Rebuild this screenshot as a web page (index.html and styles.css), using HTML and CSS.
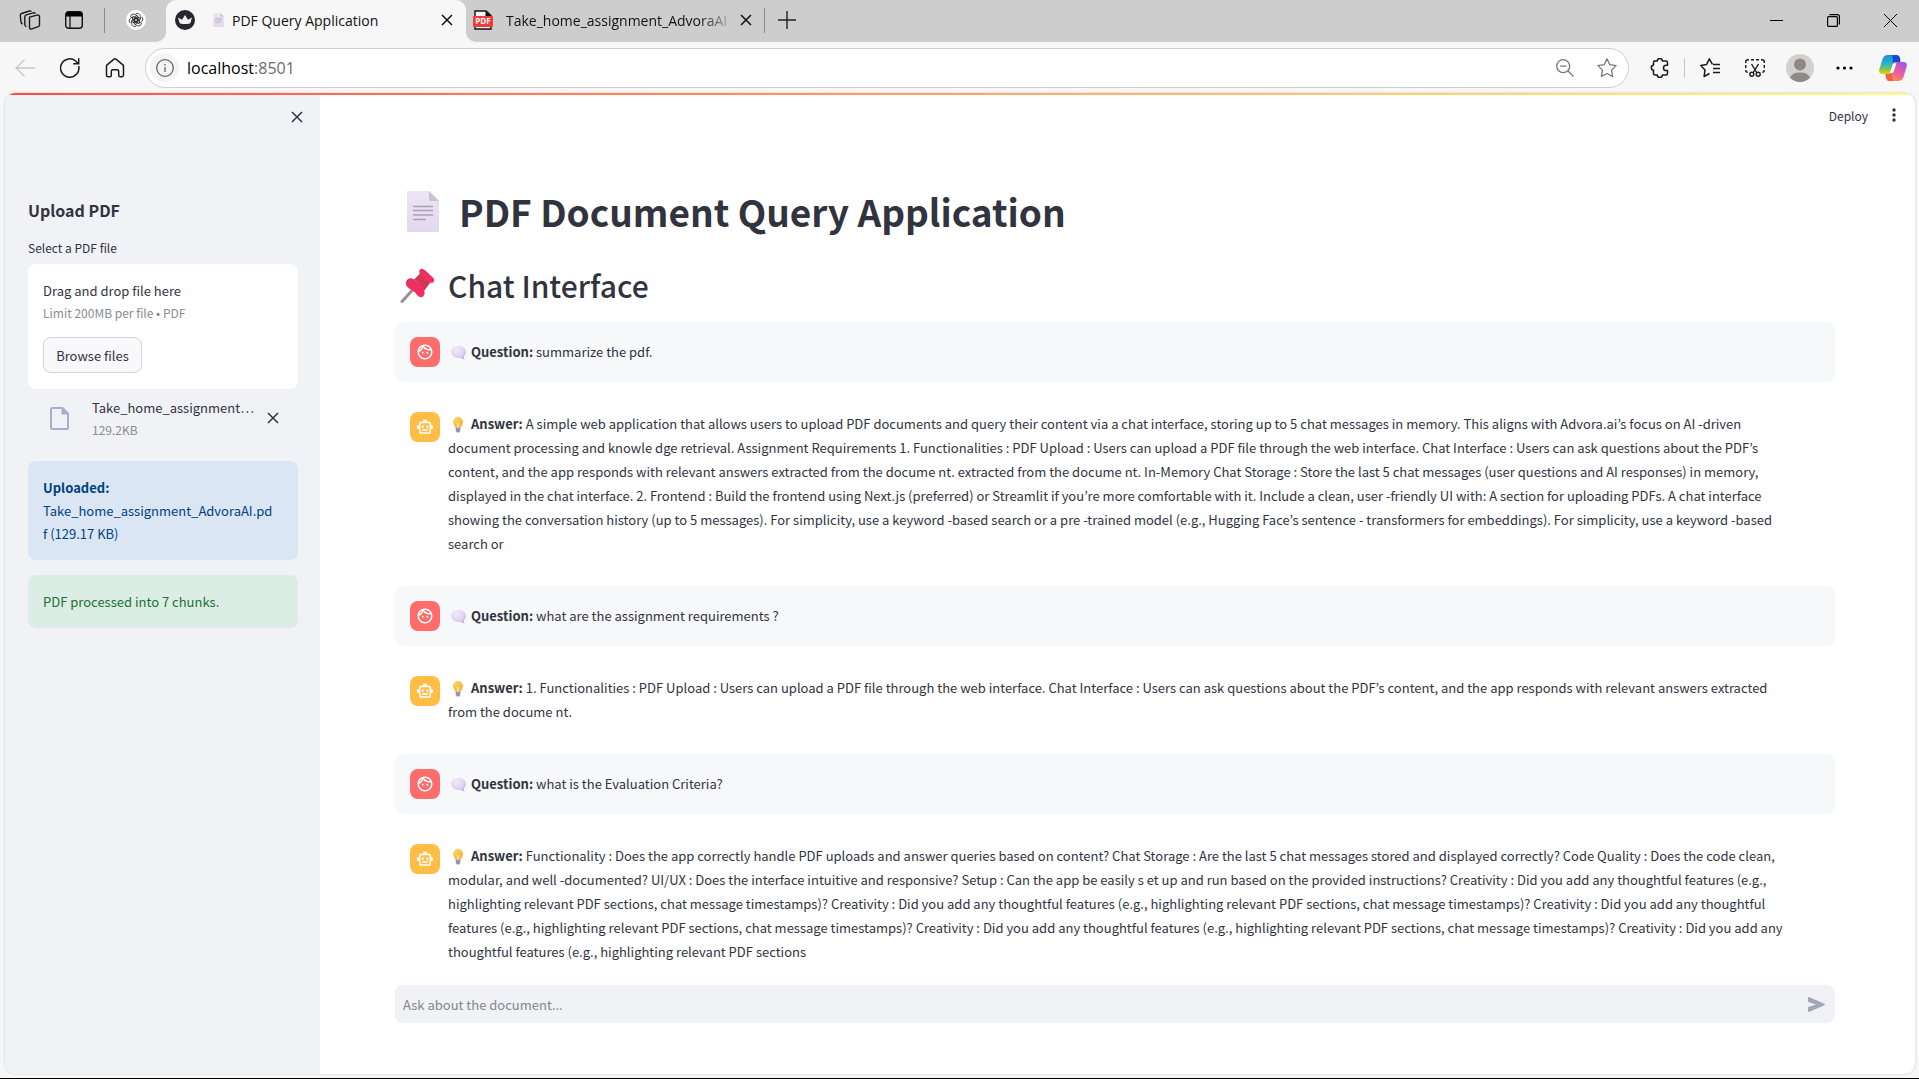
FILE: index.html
```html
<!DOCTYPE html>
<html lang="en">
<head>
<meta charset="utf-8">
<title>PDF Query Application</title>
<link rel="stylesheet" href="styles.css">
</head>
<body>
<svg class="defs" aria-hidden="true">
  <defs>
    <linearGradient id="paper" x1="0" y1="0" x2="0" y2="1"><stop offset="0" stop-color="#ece5f4"/><stop offset="1" stop-color="#e2d9ee"/></linearGradient>
    <linearGradient id="bulbFill" x1="0" y1="0" x2="1" y2="1"><stop offset="0" stop-color="#ffd95c"/><stop offset="1" stop-color="#f5a93a"/></linearGradient>
    <radialGradient id="bubbleFill" cx=".35" cy=".3" r=".8"><stop offset="0" stop-color="#f1eafa"/><stop offset=".7" stop-color="#dcd0ee"/><stop offset="1" stop-color="#c0abdc"/></radialGradient>
    <linearGradient id="pinFill" x1="0" y1="0" x2="1" y2="1"><stop offset="0" stop-color="#e0335e"/><stop offset="1" stop-color="#fb2b63"/></linearGradient>
    <linearGradient id="copA" x1="0" y1="0" x2="0" y2="1"><stop offset="0" stop-color="#1a8be8"/><stop offset=".45" stop-color="#29b5c9"/><stop offset=".75" stop-color="#7cc653"/><stop offset="1" stop-color="#ffc800"/></linearGradient>
    <linearGradient id="copB" x1=".8" y1="0" x2=".2" y2="1"><stop offset="0" stop-color="#a256e8"/><stop offset=".5" stop-color="#ec5c9c"/><stop offset="1" stop-color="#ff9a3d"/></linearGradient>
    <symbol id="x" viewBox="0 0 12 12"><path d="M1 1l10 10M11 1L1 11" fill="none" stroke="currentColor" stroke-width="1.5"/></symbol>
    <symbol id="doc" viewBox="0 0 32 41"><path d="M1 0h21l10 10v29.500a1.500 1.500 0 0 1-1.500 1.500h-29A1.500 1.500 0 0 1 0 39.500V1a1 1 0 0 1 1-1z" fill="url(#paper)"/><path d="M22 0l10 10H23.500a1.500 1.500 0 0 1-1.500-1.500z" fill="#c9c1d4"/><path d="M6 15.500h20M6 19.500h20M6 24h20M6 28.500h13" stroke="#aaa0b2" stroke-width="1.500"/></symbol>
    <symbol id="bubble" viewBox="0 0 16 14"><path d="M7.500 0C11.700 0 15 2.500 15 5.800c0 2-.9 3.500-2.300 4.600.1 1.200.5 2 1 2.800-1.700 0-3-.6-4-1.500-.7.2-1.400.2-2.200.2C3.300 11.900 0 9.200 0 5.900S3.300 0 7.500 0z" fill="url(#bubbleFill)"/></symbol>
    <symbol id="bulb" viewBox="0 0 12 16"><path d="M6 0a5 5 0 0 1 5 5c0 2.200-1.400 3.300-2 5.200-.1.500-.4.800-.9.800H3.900c-.5 0-.8-.3-.9-.8C2.400 8.300 1 7.200 1 5a5 5 0 0 1 5-5z" fill="url(#bulbFill)"/><path d="M4.500 6l1 1.500v3M7.500 6l-1 1.500v3" fill="none" stroke="#fff3b0" stroke-width=".8"/><path d="M3.700 11h4.600v2.500L7.300 15.500H4.700L3.700 13.500z" fill="#9d8fbb"/></symbol>
    <symbol id="face" viewBox="0 0 24 24"><path fill="currentColor" d="M10.250 13c0 .690-.560 1.250-1.250 1.250S7.750 13.690 7.750 13s.560-1.250 1.250-1.250 1.250.560 1.250 1.250zM15 11.750c-.690 0-1.250.560-1.250 1.250s.560 1.250 1.250 1.250 1.250-.560 1.250-1.250-.560-1.250-1.250-1.250zM22 12c0 5.520-4.480 10-10 10S2 17.520 2 12 6.480 2 12 2s10 4.480 10 10zM10.660 4.120C12.060 6.440 14.600 8 17.500 8c.460 0 .910-.050 1.340-.120C17.440 5.560 14.900 4 12 4c-.460 0-.910.050-1.340.120zM4.420 9.470c1.710-.970 3.030-2.550 3.660-4.440C6.370 6 5.050 7.580 4.420 9.470zM20 12c0-.780-.120-1.530-.330-2.240-.700.150-1.420.240-2.170.240-3.130 0-5.920-1.440-7.760-3.690C8.690 8.870 6.600 10.880 4 11.860c.010.040 0 .090 0 .140 0 4.410 3.590 8 8 8s8-3.590 8-8z"/></symbol>
    <symbol id="robot" viewBox="0 0 24 24"><path fill="currentColor" d="M20 9V7c0-1.100-.900-2-2-2h-3c0-1.660-1.340-3-3-3S9 3.340 9 5H6c-1.100 0-2 .900-2 2v2c-1.660 0-3 1.340-3 3s1.340 3 3 3v4c0 1.100.900 2 2 2h12c1.100 0 2-.900 2-2v-4c1.660 0 3-1.340 3-3s-1.340-3-3-3zm-2 10H6V7h12v12zm-9-6c-.830 0-1.500-.670-1.500-1.500S8.170 10 9 10s1.500.670 1.500 1.500S9.830 13 9 13zm7.500-1.500c0 .830-.670 1.500-1.500 1.500s-1.500-.670-1.500-1.500.670-1.500 1.500-1.500 1.500.670 1.500 1.500zM8 15h8v2H8v-2z"/></symbol>
  </defs>
</svg>

<div class="browser">
  <header class="tab-strip">
    <div class="strip-start">
      <button class="strip-btn" aria-label="Workspaces"><svg width="22" height="22" viewBox="0 0 22 22" fill="none" stroke="#1b1b1b" stroke-width="1.400" stroke-linejoin="round"><path d="M10.500 8.200l7.500-2.100q2.500-.5 2.500 1.800v8q0 1.400-1.300 1.800l-6.300 2.200q-2.400.7-2.400-1.600z"/><path d="M7.500 17.500q-1.700-.3-1.700-2V7.700q0-1.500 1.400-1.900l7-2q1.500-.4 2.200.7"/><path d="M3.600 15q-1.300-.4-1.500-1.500L1.300 6.600Q1.100 5 2.600 4.500l7.800-2.500q1.400-.4 2 .5"/></svg></button>
      <button class="strip-btn" aria-label="Tab actions"><svg width="18" height="18" viewBox="0 0 18 18"><rect x=".7" y=".7" width="16.600" height="16.600" rx="3" fill="none" stroke="#111" stroke-width="1.400"/><path d="M1 5.500V3.500A2.500 2.500 0 0 1 3.500 1h11A2.500 2.500 0 0 1 17 3.500v2z" fill="#000"/><path d="M5 5v12" stroke="#111" stroke-width="1.300"/></svg></button>
      <span class="divider"></span>
      <button class="pinned-tab" aria-label="Pinned tab"><svg width="20" height="20" viewBox="0 0 20 20"><circle cx="10" cy="10" r="10" fill="#fff"/><g fill="none" stroke="#222" stroke-width=".8"><path id="petal" d="M10 3.700c2-1 4.300.4 4.300 2.600v3.200L10.500 11.800 8 10.300V7.200L11.200 5.400"/><use href="#petal" transform="rotate(60 10 10)"/><use href="#petal" transform="rotate(120 10 10)"/><use href="#petal" transform="rotate(180 10 10)"/><use href="#petal" transform="rotate(240 10 10)"/><use href="#petal" transform="rotate(300 10 10)"/></g></svg></button>
    </div>
    <div class="tab-slot">
      <div class="tab tab-active">
        <svg width="20" height="20" viewBox="0 0 20 20"><circle cx="10" cy="10" r="10" fill="#262730"/><path d="M3 7.500l4 2.300L10 5l3 4.800 4-2.300-1.700 5.700q-5.300 1.800-10.600 0z" fill="#f3f1ee"/></svg>
        <svg class="tab-doc" width="11" height="14" viewBox="0 0 32 41"><use href="#doc"/></svg>
        <span class="tab-title">PDF Query Application</span>
        <button class="tab-close" aria-label="Close tab"><svg width="12" height="12"><use href="#x"/></svg></button>
      </div>
    </div>
    <div class="strip-end">
      <div class="tab tab-idle">
        <svg width="20" height="20" viewBox="0 0 20 20"><path d="M2 1h11l5 4.500V19H2z" fill="#f5f5f5" stroke="#111" stroke-width="1.400"/><path d="M12.500 1v5H18z" fill="#111"/><rect y="6" width="20" height="11" rx="1" fill="#f5383b"/><text class="pdf-mark" x="10" y="14" text-anchor="middle">PDF</text></svg>
        <span class="tab-title tab-fade">Take_home_assignment_AdvoraAI</span>
        <button class="tab-close" aria-label="Close tab"><svg width="12" height="12"><use href="#x"/></svg></button>
      </div>
      <span class="divider"></span>
      <button class="new-tab" aria-label="New tab"><svg width="18" height="18" viewBox="0 0 18 18"><path d="M9 0v18M0 9h18" stroke="#222" stroke-width="1.400"/></svg></button>
      <div class="window-controls">
        <button class="win-btn" aria-label="Minimize"><svg width="13" height="13" viewBox="0 0 13 13"><path d="M0 6.500h13" stroke="#000"/></svg></button>
        <button class="win-btn" aria-label="Restore"><svg width="13" height="13" viewBox="0 0 13 13" fill="none" stroke="#000" stroke-width="1.200"><rect x=".6" y="2.600" width="9.800" height="9.800" rx="1"/><path d="M2.500 .6h8q1.900 0 1.900 1.900v8"/></svg></button>
        <button class="win-btn" aria-label="Close"><svg width="13" height="13" viewBox="0 0 13 13"><path d="M0 0l13 13M13 0L0 13" stroke="#000"/></svg></button>
      </div>
    </div>
  </header>

  <nav class="toolbar" aria-label="Browser toolbar">
    <button class="tool" aria-label="Back" disabled><svg width="20" height="18" viewBox="0 0 20 18" fill="none" stroke="#c9c9c9" stroke-width="1.300"><path d="M20 9H1M9.500 .7L1 9l8.500 8.300"/></svg></button>
    <button class="tool" aria-label="Refresh"><svg width="20" height="20" viewBox="0 0 20 20" fill="none" stroke="#1b1b1b" stroke-width="1.500"><path d="M18.700 8a9.200 9.200 0 1 1-3.100-5l2.600 2.500M18.700 .3v5.400h-5.500"/></svg></button>
    <button class="tool" aria-label="Home"><svg width="20" height="20" viewBox="0 0 20 20" fill="none" stroke="#1b1b1b" stroke-width="1.500" stroke-linejoin="round"><path d="M1.500 8.200q0-.8.600-1.300L9 1.200q1-.8 2 0l6.900 5.700q.6.500.6 1.300V17q0 1.700-1.700 1.700h-1.600q-1.500 0-1.500-1.500v-4q0-1.500-1.500-1.500H7.800q-1.500 0-1.500 1.500v4q0 1.500-1.500 1.500H3.200Q1.500 18.700 1.500 17z"/></svg></button>
    <div class="address">
      <button class="site-info" aria-label="Site information"><svg width="18" height="18" viewBox="0 0 18 18"><circle cx="9" cy="9" r="8.300" fill="none" stroke="#666" stroke-width="1.300"/><path d="M9 8v5M9 5v1.500" stroke="#666" stroke-width="1.300"/></svg></button>
      <a class="url" href="#">localhost<span class="port">:8501</span></a>
      <button class="tool" aria-label="Zoom out"><svg width="18" height="18" viewBox="0 0 18 18" fill="none" stroke="#777" stroke-width="1.300"><circle cx="7.200" cy="7.200" r="6.500"/><path d="M12 12l5.500 5.500M4.200 7.200h6"/></svg></button>
      <button class="tool star" aria-label="Add to favorites"><svg width="20" height="20" viewBox="0 0 20 20" fill="none" stroke="#777" stroke-width="1.300" stroke-linejoin="round"><path d="M10 .9l2.800 5.800 6.300.9-4.600 4.500 1.100 6.400L10 15.500l-5.600 3 1.100-6.400L.9 7.600l6.300-.9z"/></svg></button>
    </div>
    <button class="tool" aria-label="Extensions"><svg width="20" height="20" viewBox="0 0 20 20" fill="none" stroke="#1b1b1b" stroke-width="1.500" stroke-linejoin="round"><path d="M4 3h3.300a2.500 2.500 0 0 1 5 0H16q1.500 0 1.500 1.500v2.700h-1.300a2.700 2.700 0 0 0 0 5.400h1.300v2.900q0 1.500-1.500 1.500h-3.700a2.500 2.500 0 0 1-5 0H5q-1.500 0-1.500-1.500v-3.200a2.700 2.700 0 0 1 0-5.300V4.500Q3.500 3 5 3z"/></svg></button>
    <span class="tool-divider"></span>
    <button class="tool" aria-label="Favorites"><svg width="20" height="20" viewBox="0 0 20 20" fill="none" stroke="#1b1b1b" stroke-width="1.500" stroke-linejoin="round"><path d="M12.500 6.300L9.300 .9 6.500 6.600l-5.800.9 4.300 4.400-.9 6.600 5.400-3M13 6.500h7M13 10.500h7M13 14.500h7"/></svg></button>
    <button class="tool" aria-label="Screenshot"><svg width="20" height="18" viewBox="0 0 20 18" fill="none" stroke="#1b1b1b" stroke-width="1.400"><path d="M.7 4V3Q.7 .7 3 .7h1M6 .7h3M11 .7h3M16 .7h1q2.300 0 2.300 2.300v1M.7 6v3M19.300 6v3M.7 11q0 2.300 2 2.300M19.300 11q0 2.300-2 2.300M6.500 5l5.500 9M13.500 5L8 14"/><circle cx="6.800" cy="15.200" r="2"/><circle cx="13.200" cy="15.200" r="2"/></svg></button>
    <button class="tool" aria-label="Profile"><svg width="28" height="28" viewBox="0 0 28 28"><circle cx="14" cy="14" r="14" fill="#d3d0ce"/><circle cx="14" cy="10.500" r="6" fill="#8d8986"/><path d="M4 23.800q2-5.300 10-5.300t10 5.300A14 14 0 0 1 4 23.800z" fill="#8d8986"/></svg></button>
    <button class="tool" aria-label="Settings and more"><svg width="17" height="4" viewBox="0 0 17 4"><circle cx="2" cy="2" r="1.600"/><circle cx="8.500" cy="2" r="1.600"/><circle cx="15" cy="2" r="1.600"/></svg></button>
    <button class="tool copilot" aria-label="Copilot"><svg width="28" height="26" viewBox="0 0 28 26"><path d="M9 0h8.500q2.500 0 3.300 2.500L21.500 5H17q-2 0-2.600 2l-3 10q-.6 2-2.600 2H3.500Q-.5 19 .3 14.500L3.500 4Q5 0 9 0z" fill="url(#copA)"/><path d="M13.500 0h4q2.500 0 3.300 2.500L21.500 7H17q-2 0-3 2z" fill="#1b49c9"/><path d="M19 26h-8.500Q8 26 7.200 23.500L6.500 19h3.300q2 0 2.600-2l3-8q.6-2 2.600-2h6.500q4 0 3.200 4.500L24.500 22q-1.500 4-5.500 4z" fill="url(#copB)"/><path d="M14 26h-3.500Q8 26 7.200 23.500L6.500 19h3.300q2 0 2.700-2z" fill="#f2623a"/><path d="M14.500 8.500h3l-3.500 9.500h-3z" fill="#fff"/></svg></button>
  </nav>

  <div class="page">
    <div class="decoration"></div>
    <div class="app">
      <aside class="sidebar">
        <div class="sidebar-top"><button class="icon-btn" aria-label="Close sidebar"><svg width="12" height="12"><use href="#x"/></svg></button></div>
        <h2 class="sidebar-title">Upload PDF</h2>
        <label class="field-label" for="browse">Select a PDF file</label>
        <section class="dropzone">
          <p class="drop-text">Drag and drop file here</p>
          <p class="small-text">Limit 200MB per file • PDF</p>
          <button class="browse" id="browse">Browse files</button>
        </section>
        <div class="file-row">
          <svg class="file-icon" width="19" height="23" viewBox="0 0 19 23"><path d="M2.500 1h10L18 6.500V20.500Q18 22 16.500 22h-14Q1 22 1 20.500v-18Q1 1 2.500 1z" fill="none" stroke="#a3afcd" stroke-width="2"/><path d="M11.500 1v6.500H18z" fill="#a3afcd"/></svg>
          <div class="file-meta">
            <p class="file-name">Take_home_assignment…</p>
            <p class="small-text">129.2KB</p>
          </div>
          <button class="icon-btn" aria-label="Remove file"><svg width="12" height="12"><use href="#x"/></svg></button>
        </div>
        <div class="alert alert-info"><strong>Uploaded:</strong><br>Take_home_assignment_AdvoraAI.pd<br>f (129.17 KB)</div>
        <div class="alert alert-success">PDF processed into 7 chunks.</div>
      </aside>

      <main class="main">
        <div class="app-header">
          <button class="deploy">Deploy</button>
          <button class="icon-btn" aria-label="Main menu"><svg width="4" height="14" viewBox="0 0 4 14" fill="#31333f"><circle cx="2" cy="2" r="1.700"/><circle cx="2" cy="7" r="1.700"/><circle cx="2" cy="12" r="1.700"/></svg></button>
        </div>
        <div class="column">
          <h1 class="title"><svg width="58" height="44" viewBox="0 0 58 44"><use href="#doc" x="12" y="2" width="32" height="41"/></svg>PDF Document Query Application</h1>
          <h2 class="subtitle"><svg width="48" height="36" viewBox="0 0 48 36"><path d="M7 34.500L17.500 23" stroke="#998ea0" stroke-width="3" stroke-linecap="round"/><path d="M19 12.500L26.500 5l10 9-7.500 10q-4-8-10-11.500z" fill="#cf3658"/><path d="M11.500 13.500q3-4 7.500-1 6.500 4 9.500 9.500 2.500 4.500-.5 7.500-2.500 2.300-6-1.500-2.500-4-8-6.500-4.500-3.500-2.500-8z" fill="url(#pinFill)"/><path d="M25 2.500q2.500-2 6.500 2t6.500 6q2.500 3 0 5-2 1-5-1-5-2-7-6.500-3-3-1-5.500z" fill="url(#pinFill)"/></svg>Chat Interface</h2>

          <div class="chat">
            <article class="message question">
              <span class="avatar avatar-user"><svg width="18" height="18"><use href="#face"/></svg></span>
              <p class="text"><svg class="emoji" width="23" height="14" viewBox="0 0 23 14"><use href="#bubble" x="3" width="16" height="14"/></svg><strong>Question:</strong> summarize the pdf.</p>
            </article>
            <article class="message">
              <span class="avatar avatar-bot"><svg width="18" height="18"><use href="#robot"/></svg></span>
              <p class="text"><svg class="emoji" width="23" height="16" viewBox="0 0 23 16"><use href="#bulb" x="4" width="12" height="16"/></svg><strong>Answer:</strong> A simple web application that allows users to upload PDF documents and query their content via a chat interface, storing up to 5 chat messages in memory. This aligns with Advora.ai’s focus on AI -driven<br>document processing and knowle dge retrieval. Assignment Requirements 1. Functionalities : PDF Upload : Users can upload a PDF file through the web interface. Chat Interface : Users can ask questions about the PDF’s<br>content, and the app responds with relevant answers extracted from the docume nt. extracted from the docume nt. In-Memory Chat Storage : Store the last 5 chat messages (user questions and AI responses) in memory,<br>displayed in the chat interface. 2. Frontend : Build the frontend using Next.js (preferred) or Streamlit if you’re more comfortable with it. Include a clean, user -friendly UI with: A section for uploading PDFs. A chat interface<br>showing the conversation history (up to 5 messages). For simplicity, use a keyword -based search or a pre -trained model (e.g., Hugging Face’s sentence - transformers for embeddings). For simplicity, use a keyword -based<br>search or</p>
            </article>
            <article class="message question">
              <span class="avatar avatar-user"><svg width="18" height="18"><use href="#face"/></svg></span>
              <p class="text"><svg class="emoji" width="23" height="14" viewBox="0 0 23 14"><use href="#bubble" x="3" width="16" height="14"/></svg><strong>Question:</strong> what are the assignment requirements ?</p>
            </article>
            <article class="message">
              <span class="avatar avatar-bot"><svg width="18" height="18"><use href="#robot"/></svg></span>
              <p class="text"><svg class="emoji" width="23" height="16" viewBox="0 0 23 16"><use href="#bulb" x="4" width="12" height="16"/></svg><strong>Answer:</strong> 1. Functionalities : PDF Upload : Users can upload a PDF file through the web interface. Chat Interface : Users can ask questions about the PDF’s content, and the app responds with relevant answers extracted<br>from the docume nt.</p>
            </article>
            <article class="message question">
              <span class="avatar avatar-user"><svg width="18" height="18"><use href="#face"/></svg></span>
              <p class="text"><svg class="emoji" width="23" height="14" viewBox="0 0 23 14"><use href="#bubble" x="3" width="16" height="14"/></svg><strong>Question:</strong> what is the Evaluation Criteria?</p>
            </article>
            <article class="message">
              <span class="avatar avatar-bot"><svg width="18" height="18"><use href="#robot"/></svg></span>
              <p class="text"><svg class="emoji" width="23" height="16" viewBox="0 0 23 16"><use href="#bulb" x="4" width="12" height="16"/></svg><strong>Answer:</strong> Functionality : Does the app correctly handle PDF uploads and answer queries based on content? Chat Storage : Are the last 5 chat messages stored and displayed correctly? Code Quality : Does the code clean,<br>modular, and well -documented? UI/UX : Does the interface intuitive and responsive? Setup : Can the app be easily s et up and run based on the provided instructions? Creativity : Did you add any thoughtful features (e.g.,<br>highlighting relevant PDF sections, chat message timestamps)? Creativity : Did you add any thoughtful features (e.g., highlighting relevant PDF sections, chat message timestamps)? Creativity : Did you add any thoughtful<br>features (e.g., highlighting relevant PDF sections, chat message timestamps)? Creativity : Did you add any thoughtful features (e.g., highlighting relevant PDF sections, chat message timestamps)? Creativity : Did you add any<br>thoughtful features (e.g., highlighting relevant PDF sections</p>
            </article>
          </div>

          <form class="chat-form">
            <input class="chat-input" type="text" placeholder="Ask about the document..." aria-label="Ask about the document">
            <button class="send" type="button" aria-label="Send"><svg width="17" height="15" viewBox="0 0 17 15"><path d="M0 1.200Q0-.3 1.500.2L16 6.500q1.800 1 0 2L1.500 14.800Q0 15.300 0 13.800V10l8-2.500L0 5z" fill="#a3a8b8"/></svg></button>
          </form>
        </div>
      </main>
    </div>
  </div>
</div>
</body>
</html>
```
FILE: styles.css
```css
* { box-sizing: border-box; }

body {
  margin: 0;
  font-family: "Noto Sans CJK KR", "Noto Sans", sans-serif;
  font-size: 13px;
  color: #31333f;
}

h1, h2, p { margin: 0; }

button {
  padding: 0;
  border: 0;
  background: none;
  color: inherit;
  font: inherit;
}

svg { display: block; flex: none; }
.defs { position: absolute; width: 0; height: 0; }

.browser {
  display: flex;
  flex-direction: column;
  min-height: 100vh;
  background: #f7f7f7;
  border-bottom: 1px solid #000;
}

/* Tab strip */
.tab-strip {
  display: flex;
  height: 42px;
  font-family: "Open Sans", sans-serif;
  font-size: 14px;
  color: #111;
}

.strip-start, .strip-end {
  display: flex;
  align-items: center;
  padding-bottom: 2px;
  background: #cdcdcd;
}

.strip-start {
  width: 166px;
  padding-left: 8px;
  border-bottom-right-radius: 10px;
}

.strip-end {
  flex: 1;
  border-bottom-left-radius: 10px;
}

.strip-btn {
  display: grid;
  place-items: center;
  width: 44px;
  height: 32px;
}

.divider { width: 1px; height: 25px; margin: 0 8px; background: #8a8a8a; }
.pinned-tab { margin-left: 13px; }

.tab-slot { width: 300px; background: #cdcdcd; }

.tab {
  display: flex;
  align-items: center;
  height: 100%;
}

.tab-active {
  padding: 0 13px 2px 9px;
  border-radius: 10px 10px 0 0;
  background: #f7f7f7;
}

.tab-idle { width: 292px; padding: 0 6px 0 7px; }
.tab-doc { margin: 0 8px 0 18px; }
.tab-title { flex: 1; white-space: nowrap; }

.tab-fade {
  margin: 0 4px 0 13px;
  background: linear-gradient(90deg, #111 84%, #cdcdcd 100%);
  background-clip: text;
  color: transparent;
}

.tab-idle + .divider { margin-left: 6px; }
.new-tab { margin-left: 5px; }
.pdf-mark { font: 700 8px "Open Sans", sans-serif; fill: #fff; }

.window-controls { display: flex; margin-left: auto; }
.win-btn { display: grid; place-items: center; width: 57px; height: 40px; }

/* Toolbar */
.toolbar {
  display: flex;
  align-items: center;
  height: 51px;
  padding: 0 1px 0 2px;
}

.tool { display: grid; place-items: center; width: 45px; height: 40px; }
.copilot { width: 51px; }

.address {
  display: flex;
  flex: 1;
  align-items: center;
  height: 40px;
  margin: 0 8px;
  padding-left: 4px;
  border: 1px solid #cfcfcf;
  border-radius: 20px;
  background: #fff;
}

.site-info {
  display: grid;
  place-items: center;
  width: 29px;
  height: 29px;
  border-radius: 50%;
  background: #f4f4f4;
}

.url {
  flex: 1;
  margin-left: 8px;
  font: 16px "Open Sans", sans-serif;
  color: #000;
  text-decoration: none;
}

.port { color: #6b6b6b; }
.address .tool { width: 42px; }
.tool-divider { width: 1px; height: 20px; margin: 0 2px; background: #c8c8c8; }

/* Page surface */
.page {
  display: flex;
  flex: 1;
  flex-direction: column;
  margin: 0 4px 4px 5px;
  overflow: hidden;
  border-radius: 10px;
  background: #fff;
  box-shadow: 0 0 2px #b8b8b8;
}

.decoration { height: 2px; background: linear-gradient(90deg, #ff4b4b, #fffd80); }
.app { display: flex; flex: 1; }

/* Sidebar */
.sidebar {
  display: flex;
  flex: none;
  flex-direction: column;
  width: 315px;
  padding: 0 22px 0 23px;
  background: #f0f2f6;
}

.icon-btn { display: grid; place-items: center; width: 20px; height: 20px; }

.sidebar-top { display: flex; justify-content: flex-end; padding: 12px 0 0; margin-right: -9px; }
.sidebar-title { margin-top: 71px; font-size: 16px; font-weight: 700; line-height: 24px; }
.field-label { margin-top: 16px; font-size: 12px; line-height: 20px; }

.dropzone {
  margin-top: 6px;
  padding: 15px 15px 16px;
  border-radius: 8px;
  background: #fff;
}

.drop-text { line-height: 24px; }
.small-text { font-size: 12px; line-height: 20px; color: #8a8b95; }

.browse {
  width: 99px;
  height: 36px;
  margin-top: 14px;
  border: 1px solid #d3d4d9;
  border-radius: 8px;
  background: #f9f9fb;
}

.file-row { display: flex; align-items: center; padding: 7px 15px 21px 22px; }
.file-meta { flex: 1; margin-left: 23px; line-height: 24px; }
.file-name { white-space: nowrap; }

.alert { padding: 15px; border-radius: 8px; line-height: 23px; }
.alert strong { font-weight: 700; }
.alert-info { background: #dae6f4; color: #004280; }
.alert-success { margin-top: 15px; background: #dcede5; color: #177233; }

/* Main area */
.main { display: flex; flex: 1; flex-direction: column; min-width: 0; }

.app-header {
  display: flex;
  justify-content: flex-end;
  align-items: center;
  gap: 16px;
  height: 40px;
  padding-right: 11px;
}

.deploy { font-size: 12px; }

.column {
  display: flex;
  flex: 1;
  flex-direction: column;
  padding: 54px 80px 51px 75px;
}

.title, .subtitle { display: flex; align-items: center; }
.title { gap: 6px; font-size: 37px; font-weight: 700; line-height: 44px; }
.subtitle { gap: 5px; margin-top: 34px; font-size: 30px; font-weight: 500; line-height: 36px; }

.chat { display: flex; flex-direction: column; gap: 15px; margin-top: 19px; }
.message { display: flex; gap: 8px; padding: 15px; }
.message.question { align-items: center; border-radius: 8px; background: #f7f8fa; }

.avatar {
  display: grid;
  flex: none;
  place-items: center;
  width: 30px;
  height: 30px;
  border-radius: 8px;
  color: #fff;
}

.avatar-user { background: #ff6c6c; }
.avatar-bot { background: #ffbd45; }

.text { flex: 1; line-height: 24px; }
.text strong { font-weight: 700; }
.emoji { display: inline-block; vertical-align: middle; }

.chat-form {
  display: flex;
  align-items: center;
  height: 38px;
  margin-top: auto;
  padding: 0 10px 0 8px;
  border-radius: 8px;
  background: #f0f2f6;
}

.chat-input {
  flex: 1;
  padding: 0;
  border: 0;
  outline: 0;
  background: none;
  font: inherit;
}

.chat-input::placeholder { color: #84858f; opacity: 1; }
```
